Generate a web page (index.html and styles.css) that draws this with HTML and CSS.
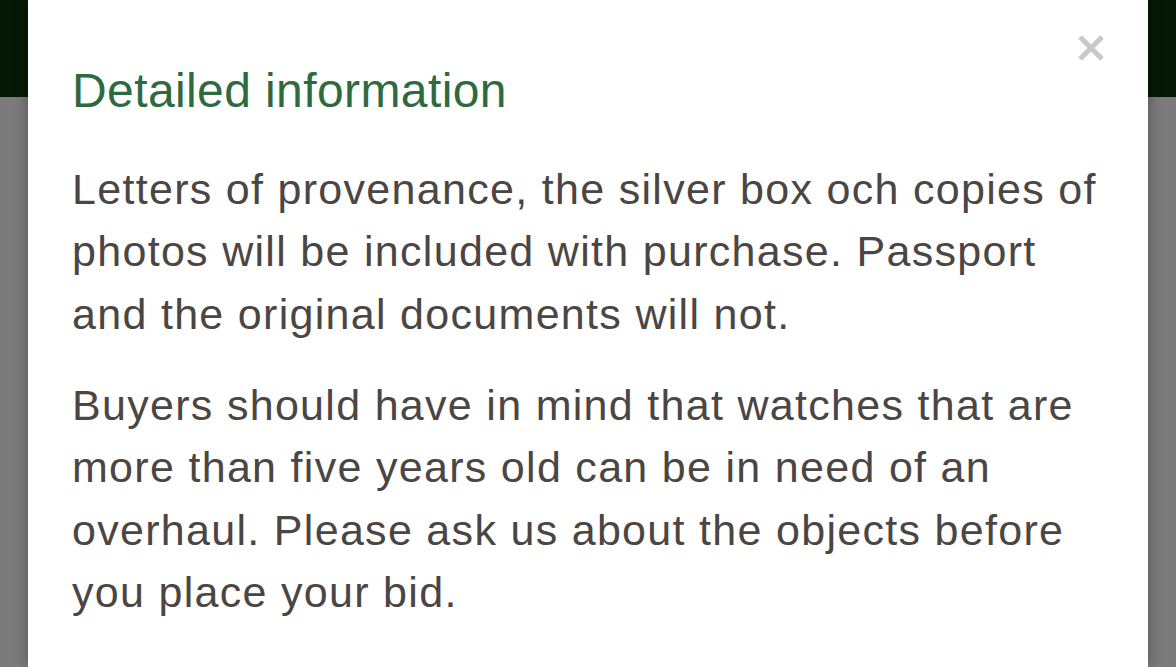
FILE: index.html
```html
<!DOCTYPE html>
<html lang="en">
<head>
<meta charset="utf-8">
<title>Detailed information</title>
<link rel="stylesheet" href="styles.css">
</head>
<body>
<div class="page">
  <header class="topbar"></header>
  <main class="backdrop"></main>
</div>
<div class="modal" role="dialog" aria-labelledby="modal-title">
  <button class="close" aria-label="Close">
    <svg width="28" height="28" viewBox="0 0 28 28" aria-hidden="true">
      <path d="M3 3 L25 25 M25 3 L3 25" stroke="#c8c8c8" stroke-width="5" stroke-linecap="butt" fill="none"/>
    </svg>
  </button>
  <h2 id="modal-title" class="modal-title">Detailed information</h2>
  <p class="modal-text">Letters of provenance, the silver box och copies of photos will be included with purchase. Passport and the original documents will not.</p>
  <p class="modal-text">Buyers should have in mind that watches that are more than five years old can be in need of an overhaul. Please ask us about the objects before you place your bid.</p>
</div>
</body>
</html>
```
FILE: styles.css
```css
html, body {
  margin: 0;
  padding: 0;
  height: 100%;
  overflow: hidden;
}
body {
  font-family: "Liberation Sans", Arial, sans-serif;
  background: #7b7b7b;
}
.page {
  display: flex;
  flex-direction: column;
  height: 100%;
}
.topbar {
  height: 97px;
  background: #061805;
  flex: none;
}
.backdrop {
  flex: 1;
  background: #7b7b7b;
}
.modal {
  position: absolute;
  top: 0;
  left: 28px;
  right: 28px;
  bottom: 0;
  background: #ffffff;
  box-shadow: 0 0 14px rgba(0, 0, 0, 0.35);
  padding: 65px 36px 0 44px;
  box-sizing: border-box;
  overflow: hidden;
}
.close {
  position: absolute;
  top: 34px;
  right: 43px;
  width: 28px;
  height: 28px;
  padding: 0;
  border: 0;
  background: none;
  display: block;
}
.close svg {
  display: block;
}
.modal-title {
  margin: 0 0 40px;
  font-weight: normal;
  font-size: 48px;
  line-height: 52.8px;
  color: #2e6a40;
  letter-spacing: 0.4px;
}
.modal-text {
  margin: 0 0 28.5px;
  font-size: 43px;
  line-height: 62.5px;
  color: #4b4543;
  letter-spacing: 1.3px;
}
```
